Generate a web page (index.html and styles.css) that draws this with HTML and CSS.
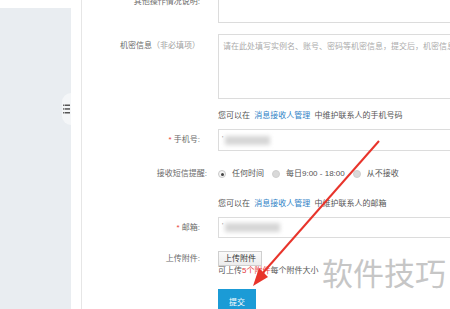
FILE: index.html
```html
<!DOCTYPE html>
<html lang="zh-CN">
  <head>
    <meta charset="UTF-8" />
    <meta name="viewport" content="width=device-width, initial-scale=1.0" />
    <title>提交工单</title>
    <link rel="stylesheet" href="styles.css">
  </head>
  <body>
    <div class="page">
      <aside class="sidebar">
        <span class="sidebar-toggle">
          <svg width="7" height="10" viewBox="0 0 7 10">
            <rect x="0" y="0.5" width="1.5" height="1.5" fill="#666" />
            <rect x="2" y="0.5" width="5" height="1.5" fill="#555" />
            <rect x="0" y="4.2" width="1.5" height="1.5" fill="#666" />
            <rect x="2" y="4.2" width="5" height="1.5" fill="#555" />
            <rect x="0" y="8" width="1.5" height="1.5" fill="#666" />
            <rect x="2" y="8" width="5" height="1.5" fill="#555" />
          </svg>
        </span>
      </aside>

      <main class="content">
        <form class="ticket-form">
          <div class="form-row row-first">
            <label class="form-label">其他操作情况说明:</label>
            <div class="form-field">
              <textarea class="textarea textarea-short"></textarea>
            </div>
          </div>

          <div class="form-row row-gap-11">
            <label class="form-label">机密信息<span class="optional">（非必填项）</span></label>
            <div class="form-field">
              <textarea class="textarea textarea-tall" placeholder="请在此处填写实例名、账号、密码等机密信息，提交后，机密信息将被加密保存"></textarea>
            </div>
          </div>

          <div class="form-row row-gap-11">
            <span></span>
            <p class="hint">您可以在 <a href="#">消息接收人管理</a> 中维护联系人的手机号码</p>
          </div>

          <div class="form-row row-inline row-gap-7">
            <label class="form-label"><span class="required">*</span> 手机号:</label>
            <div class="form-field">
              <div class="input input-phone"><span class="tick">'</span><span class="masked"></span></div>
            </div>
          </div>

          <div class="form-row row-inline row-gap-17">
            <label class="form-label form-label-wide">接收短信提醒:</label>
            <div class="form-field radio-group">
              <label class="radio"><span class="radio-dot checked"></span>任何时间</label>
              <label class="radio"><span class="radio-dot"></span>每日9:00 - 18:00</label>
              <label class="radio"><span class="radio-dot"></span>从不接收</label>
            </div>
          </div>

          <div class="form-row row-gap-18">
            <span></span>
            <p class="hint">您可以在 <a href="#">消息接收人管理</a> 中维护联系人的邮箱</p>
          </div>

          <div class="form-row row-inline row-gap-7">
            <label class="form-label"><span class="required">*</span> 邮箱:</label>
            <div class="form-field">
              <div class="input input-mail"><span class="tick">'</span><span class="masked masked-long"></span></div>
            </div>
          </div>

          <div class="form-row row-gap-13">
            <label class="form-label form-label-btn">上传附件:</label>
            <div class="form-field">
              <button type="button" class="btn-upload">上传附件</button>
              <p class="upload-tip">可上传<em>5个附件</em>每个附件大小</p>
            </div>
          </div>

          <div class="form-row row-gap-13">
            <span></span>
            <div class="form-field">
              <button type="submit" class="btn-submit">提交</button>
            </div>
          </div>
        </form>
      </main>

      <div class="watermark">软件技巧</div>

      <svg class="arrow" width="450" height="309" viewBox="0 0 450 309">
        <line x1="379" y1="141" x2="261" y2="275" stroke="#e8342b" stroke-width="2" />
        <polygon points="253,286 268,277 259,268" fill="#e8342b" />
      </svg>
    </div>
  </body>
</html>
```

FILE: styles.css
```css
* {
  box-sizing: border-box;
}

body {
  margin: 0;
  background: #fff;
  font-family: "Liberation Sans", "Noto Sans CJK SC", sans-serif;
  font-size: 8px;
  color: #666;
}

.page {
  position: relative;
  display: flex;
  width: 450px;
  height: 309px;
  overflow: hidden;
}

/* left menu */
.sidebar {
  position: relative;
  flex: 0 0 71px;
  margin-top: 8px;
  margin-right: 10px;
  background: #e9edf1;
}

.sidebar-toggle {
  position: absolute;
  right: 0;
  top: 85px;
  width: 9px;
  height: 32px;
  display: flex;
  align-items: center;
  justify-content: flex-end;
  padding-right: 1px;
  background: #f4f6f8;
  border-radius: 9px 0 0 9px;
}

.content {
  flex: 1;
  min-width: 0;
  border-left: 1px solid #e6e6e6;
}

.ticket-form {
  margin: 0;
}

.form-row {
  display: grid;
  grid-template-columns: 118px 400px;
  column-gap: 18px;
  align-items: start;
}

.row-first { margin-top: -10px; }
.row-gap-7 { margin-top: 7px; }
.row-gap-11 { margin-top: 11px; }
.row-gap-13 { margin-top: 13px; }
.row-gap-17 { margin-top: 17px; }
.row-gap-18 { margin-top: 18px; }

.row-inline {
  align-items: center;
}

.form-label {
  text-align: right;
  line-height: 12px;
  padding-top: 6px;
  color: #6a6a6a;
  white-space: nowrap;
}

.row-inline .form-label {
  padding-top: 0;
}

.form-label-wide {
  margin-right: -7px;
}

.form-label-btn {
  padding-top: 2px;
}

.optional {
  color: #a0a0a0;
}

.required {
  color: #e9443b;
}

.textarea {
  display: block;
  width: 100%;
  margin: 0;
  padding: 6px 4px;
  border: 1px solid #dcdcdc;
  font: inherit;
  line-height: 12px;
  color: #555;
  resize: none;
  background: #fff;
}

.textarea::placeholder {
  color: #ababab;
}

.textarea-short { height: 33px; }
.textarea-tall { height: 65px; }

.hint {
  margin: 0;
  line-height: 12px;
  color: #555;
  white-space: nowrap;
}

.hint a {
  color: #2f82c6;
  text-decoration: none;
  margin: 0 2px;
}

.input {
  display: flex;
  align-items: center;
  gap: 2px;
  width: 100%;
  padding-left: 3px;
  border: 1px solid #dcdcdc;
  background: #fff;
}

.input-phone { height: 22px; }
.input-mail { height: 21px; }

.tick {
  color: #888;
  font-size: 7px;
  margin-top: -4px;
}

.masked {
  width: 45px;
  height: 9px;
  background: #d6d6d6;
  filter: blur(2px);
}

.masked-long {
  width: 55px;
}

.radio-group {
  display: flex;
  align-items: center;
  gap: 8px;
  line-height: 12px;
  color: #555;
}

.radio {
  display: flex;
  align-items: center;
  gap: 6px;
  white-space: nowrap;
}

.radio-dot {
  position: relative;
  width: 8px;
  height: 8px;
  border-radius: 50%;
  background: #d9d9d9;
  border: 1px solid #cfcfcf;
}

.radio-dot.checked {
  background: #f4f4f4;
  border-color: #c9c9c9;
}

.radio-dot.checked::after {
  content: "";
  position: absolute;
  left: 1.5px;
  top: 1.5px;
  width: 3px;
  height: 3px;
  border-radius: 50%;
  background: #444;
}

.btn-upload {
  display: block;
  height: 15px;
  padding: 0 5px;
  margin: 0;
  border: 1px solid #cfcfcf;
  background: linear-gradient(#fafafa, #ededed);
  font: inherit;
  color: #333;
  line-height: 13px;
}

.upload-tip {
  margin: 0;
  line-height: 10px;
  color: #555;
  white-space: nowrap;
}

.upload-tip em {
  font-style: normal;
  color: #e4393c;
}

.btn-submit {
  width: 38px;
  height: 24px;
  margin: 0;
  border: none;
  background: #1b9bd6;
  color: #fff;
  font: inherit;
}

/* overlays */
.watermark {
  position: absolute;
  left: 320px;
  top: 252px;
  padding-left: 2px;
  font-family: "Noto Sans CJK SC", sans-serif;
  font-size: 31px;
  line-height: 40px;
  color: #c6c6c6;
  background: rgba(255, 255, 255, 0.85);
}

.arrow {
  position: absolute;
  left: 0;
  top: 0;
  pointer-events: none;
}
```
